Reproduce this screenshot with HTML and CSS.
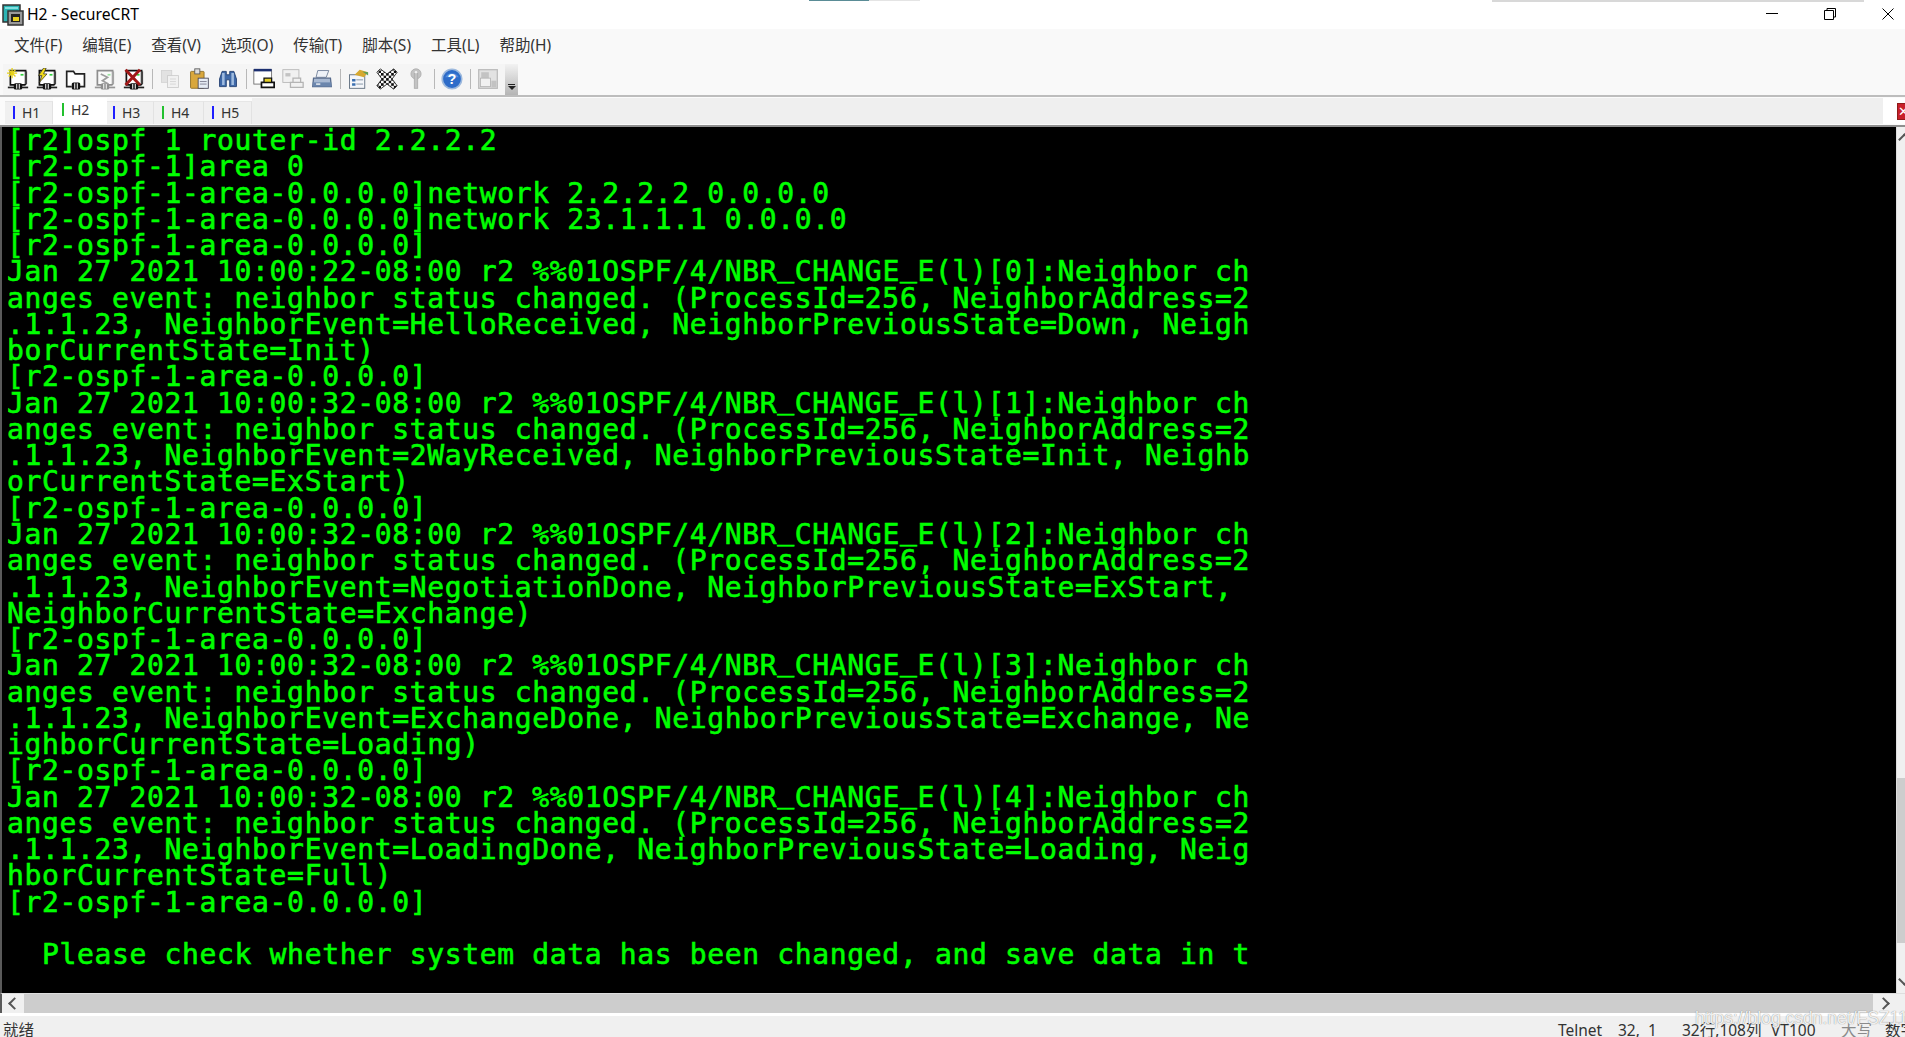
FILE: index.html
```html
<!DOCTYPE html>
<html lang="zh">
<head>
<meta charset="utf-8">
<title>H2 - SecureCRT</title>
<link rel="stylesheet" href="styles.css">
</head>
<body>
<svg class="defs" width="0" height="0" aria-hidden="true">
  <defs>
    <pattern id="chk" width="6" height="6" patternUnits="userSpaceOnUse">
      <rect width="6" height="6" fill="#fff"/>
      <rect width="3" height="3" fill="#111"/>
      <rect x="3" y="3" width="3" height="3" fill="#111"/>
    </pattern>
    <symbol id="term" viewBox="0 0 26 26">
      <path d="M4 3h18v16l-1 1H4z" fill="#fff" stroke="#111" stroke-width="2"/>
      <path d="M22.500 4v15" stroke="#444" stroke-width="2.500"/>
      <path d="M1 23h24" stroke="#222" stroke-width="2"/>
      <rect x="8" y="18" width="10" height="7.500" rx="2" fill="#111"/>
      <path d="M11.500 19v5.500M14.500 19v5.500" stroke="#fff" stroke-width="1.200"/>
      <rect x="16" y="7" width="3.500" height="2" fill="#2fd13a"/>
    </symbol>
  </defs>
</svg>
<div class="app">
  <header class="titlebar">
    <svg class="appicon" width="22" height="22" viewBox="0 0 22 22">
      <rect x="1" y="1" width="17" height="17" fill="#2bb3b3" stroke="#333" stroke-width="1.500"/>
      <path d="M3 3h13v2H3z" fill="#7fdede"/>
      <rect x="6" y="7" width="15" height="14" fill="#999" stroke="#333" stroke-width="1.500"/>
      <rect x="9" y="10" width="9" height="8" fill="#222"/>
      <rect x="11" y="13" width="6" height="4" fill="#e6cf1f"/>
    </svg>
    <span class="title">H2 - SecureCRT</span>
    <div class="taskhint"></div>
    <div class="shadowhint"></div>
    <div class="winctl">
      <svg width="12" height="12" viewBox="0 0 12 12"><path d="M0 5.500h12" stroke="#000"/></svg>
      <svg width="12" height="12" viewBox="0 0 12 12"><path d="M3 2.500V.500h8.500V9H9.500M.500 2.500h9v9h-9z" fill="none" stroke="#000"/></svg>
      <svg width="12" height="12" viewBox="0 0 12 12"><path d="M.500.500l11 11M11.500.500l-11 11" stroke="#000"/></svg>
    </div>
  </header>

  <nav class="menubar">
    <span class="menu">文件(F)</span><span class="menu">编辑(E)</span><span class="menu">查看(V)</span><span class="menu">选项(O)</span><span class="menu">传输(T)</span><span class="menu">脚本(S)</span><span class="menu">工具(L)</span><span class="menu">帮助(H)</span>
  </nav>

  <div class="toolbar">
    <div class="tools">
      <svg class="ico" viewBox="0 0 26 26"><use href="#term"/><path d="M6 0v12M0 6h12M2 2l8 8M10 2l-8 8" stroke="#e8d21a" stroke-width="1.600"/></svg>
      <svg class="ico" viewBox="0 0 26 26"><use href="#term"/><path d="M9 0L3 9h4l-3 8 9-10H9l3-7z" fill="#f2dc1c" stroke="#222" stroke-width=".8"/></svg>
      <svg class="ico" viewBox="0 0 26 26"><path d="M8 22H2V4h8l2 3h11v15h-6" fill="#fff" stroke="#222" stroke-width="2"/><rect x="8" y="17" width="10" height="8.500" rx="2" fill="#111"/><path d="M11.500 18v6.500M14.500 18v6.500" stroke="#fff" stroke-width="1.200"/></svg>
      <svg class="ico dim" viewBox="0 0 26 26"><use href="#term"/><path d="M8 7l8 4-6 4 7 4" fill="none" stroke="#333" stroke-width="2"/></svg>
      <svg class="ico" viewBox="0 0 26 26"><use href="#term"/><path d="M3 2l17 18M20 2L3 20" stroke="#a01818" stroke-width="3.500"/></svg>
      <i class="sep"></i>
      <svg class="ico dim" viewBox="0 0 26 26"><rect x="3" y="3" width="12" height="14" fill="#ccc" stroke="#aaa"/><rect x="10" y="9" width="13" height="14" fill="#eee" stroke="#999"/><path d="M13 13h7M13 16h7M13 19h7" stroke="#aaa"/></svg>
      <svg class="ico" viewBox="0 0 26 26"><rect x="3" y="4" width="16" height="20" rx="1" fill="#d9a73c" stroke="#8a6a20"/><rect x="8" y="1" width="6" height="6" fill="#ddd" stroke="#555"/><rect x="12" y="12" width="12" height="12" fill="#e7ecf4" stroke="#445"/><path d="M14 16h8M14 19h8" stroke="#778"/></svg>
      <svg class="ico" viewBox="0 0 26 26"><path d="M3 13l3-9h5v4h4V4h5l3 9v9h-8v-8h-4v8H3z" fill="#3f69a8" stroke="#1d3a6c"/><path d="M6 6h3v14H6zM17 6h3v14h-3z" fill="#9fbbdf"/></svg>
      <i class="sep"></i>
      <svg class="ico" viewBox="0 0 26 26"><rect x="1" y="2" width="21" height="17" fill="#fff" stroke="#666"/><rect x="1" y="1" width="21" height="3" fill="#1c2f70"/><path d="M10 17h15v6H10z" fill="#fff" stroke="#111" stroke-width="2"/><path d="M13 12h9v5h-9z" fill="#e3cf2a" stroke="#111" stroke-width="1.500"/></svg>
      <svg class="ico dim" viewBox="0 0 26 26"><rect x="1" y="2" width="19" height="15" fill="#eee" stroke="#666"/><path d="M4 6h6v4H4z" fill="#888"/><path d="M10 17h15v6H10zM13 12h9v5h-9z" fill="#eee" stroke="#666" stroke-width="1.500"/></svg>
      <svg class="ico" viewBox="0 0 26 26"><path d="M8 3h13l-3 8H6z" fill="#eef2f8" stroke="#6a7a94"/><path d="M3 12h20l1 10H2z" fill="#a8b9d2" stroke="#566a8c" stroke-width="1.500"/><path d="M2 17h22v5H2z" fill="#6b86ad"/><path d="M6 19h5" stroke="#fff" stroke-width="1.500"/></svg>
      <i class="sep"></i>
      <svg class="ico" viewBox="0 0 26 26"><rect x="3" y="8" width="18" height="16" fill="#f4f6fa" stroke="#567"/><path d="M6 13h4v3H6zM6 18h4v3H6z" fill="#3a6fb0"/><path d="M11 14h8M11 19h8" stroke="#789"/><path d="M9 8l6-6 10 3-5 6z" fill="#d6a830"/><path d="M18 4l7 1v4z" fill="#5e9e5a"/></svg>
      <svg class="ico" viewBox="0 0 26 26"><path d="M1 5l4-4 8 6 8-6 4 4-6 8 6 8-4 4-8-6-8 6-4-4 6-8z" fill="url(#chk)" stroke="#222"/></svg>
      <svg class="ico dim" viewBox="0 0 26 26"><circle cx="13" cy="7" r="6" fill="#888" stroke="#555"/><rect x="11" y="6" width="4" height="18" fill="#888" stroke="#555"/><circle cx="13" cy="5" r="1.500" fill="#eee"/></svg>
      <i class="sep"></i>
      <svg class="ico" viewBox="0 0 26 26"><circle cx="13" cy="13" r="11.500" fill="#2d6cc9" stroke="#9db9dd" stroke-width="2"/><path d="M5 11a9 9 0 0 1 16 0" fill="#6ea2ea" opacity=".6"/><text x="13" y="19" class="q">?</text></svg>
      <i class="sep"></i>
      <svg class="ico dim" viewBox="0 0 26 26"><rect x="2" y="2" width="22" height="22" fill="#ccc" stroke="#777" stroke-width="1.500"/><rect x="5" y="5" width="9" height="7" fill="#888"/><rect x="4" y="12" width="12" height="10" fill="#eee" stroke="#666"/><rect x="17" y="15" width="6" height="8" fill="#888"/></svg>
    </div>
    <div class="chev"><span class="chevline"></span><span class="chevtri"></span></div>
  </div>

  <div class="tabstrip">
    <div class="tabs">
      <span class="tab"><i class="dot blue"></i>H1</span>
      <span class="tab active"><i class="dot green"></i>H2</span>
      <span class="tab"><i class="dot blue"></i>H3</span>
      <span class="tab"><i class="dot green"></i>H4</span>
      <span class="tab"><i class="dot blue"></i>H5</span>
      <span class="tabfill"></span>
    </div>
    <div class="closezone"><span class="closetab">✕</span></div>
  </div>

  <main class="main">
    <pre class="terminal">[r2]ospf 1 router-id 2.2.2.2
[r2-ospf-1]area 0
[r2-ospf-1-area-0.0.0.0]network 2.2.2.2 0.0.0.0
[r2-ospf-1-area-0.0.0.0]network 23.1.1.1 0.0.0.0
[r2-ospf-1-area-0.0.0.0]
Jan 27 2021 10:00:22-08:00 r2 %%01OSPF/4/NBR<span class="us">_</span>CHANGE<span class="us">_</span>E(l)[0]:Neighbor ch
anges event: neighbor status changed. (ProcessId=256, NeighborAddress=2
.1.1.23, NeighborEvent=HelloReceived, NeighborPreviousState=Down, Neigh
borCurrentState=Init)
[r2-ospf-1-area-0.0.0.0]
Jan 27 2021 10:00:32-08:00 r2 %%01OSPF/4/NBR<span class="us">_</span>CHANGE<span class="us">_</span>E(l)[1]:Neighbor ch
anges event: neighbor status changed. (ProcessId=256, NeighborAddress=2
.1.1.23, NeighborEvent=2WayReceived, NeighborPreviousState=Init, Neighb
orCurrentState=ExStart)
[r2-ospf-1-area-0.0.0.0]
Jan 27 2021 10:00:32-08:00 r2 %%01OSPF/4/NBR<span class="us">_</span>CHANGE<span class="us">_</span>E(l)[2]:Neighbor ch
anges event: neighbor status changed. (ProcessId=256, NeighborAddress=2
.1.1.23, NeighborEvent=NegotiationDone, NeighborPreviousState=ExStart,
NeighborCurrentState=Exchange)
[r2-ospf-1-area-0.0.0.0]
Jan 27 2021 10:00:32-08:00 r2 %%01OSPF/4/NBR<span class="us">_</span>CHANGE<span class="us">_</span>E(l)[3]:Neighbor ch
anges event: neighbor status changed. (ProcessId=256, NeighborAddress=2
.1.1.23, NeighborEvent=ExchangeDone, NeighborPreviousState=Exchange, Ne
ighborCurrentState=Loading)
[r2-ospf-1-area-0.0.0.0]
Jan 27 2021 10:00:32-08:00 r2 %%01OSPF/4/NBR<span class="us">_</span>CHANGE<span class="us">_</span>E(l)[4]:Neighbor ch
anges event: neighbor status changed. (ProcessId=256, NeighborAddress=2
.1.1.23, NeighborEvent=LoadingDone, NeighborPreviousState=Loading, Neig
hborCurrentState=Full)
[r2-ospf-1-area-0.0.0.0]

  Please check whether system data has been changed, and save data in t</pre>
    <div class="vscroll">
      <span class="arrow up"></span>
      <div class="vtrack"><div class="vthumb"></div></div>
      <span class="arrow down"></span>
    </div>
  </main>

  <div class="hscroll">
    <span class="harrow left"></span>
    <div class="htrack"></div>
    <span class="harrow right"></span>
  </div>

  <footer class="status">
    <span class="ready">就绪</span>
    <span class="pane p1">Telnet</span>
    <span class="pane p2">32,&nbsp;&nbsp;1</span>
    <span class="pane p3">32行,108列</span>
    <span class="pane p4">VT100</span>
    <span class="pane p5 off">大写</span>
    <span class="pane p6">数字</span>
  </footer>
  <div class="watermark">https://blog.csdn.net/FSZ111</div>
</div>
</body>
</html>
```
FILE: styles.css
```css
* { box-sizing: border-box; }
html, body { margin: 0; padding: 0; height: 100%; overflow: hidden; background: #fff; }
.defs { position: absolute; }
.app {
  position: relative;
  display: flex;
  flex-direction: column;
  width: 1905px;
  height: 1037px;
  overflow: hidden;
  font-family: "Noto Sans", "Noto Sans CJK SC", sans-serif;
}

/* title bar */
.titlebar {
  position: relative;
  flex: 0 0 29px;
  display: flex;
  align-items: center;
  background: #fff;
  padding-left: 2px;
}
.appicon { flex: none; margin-right: 3px; }
.title { font-size: 15.700px; color: #000; padding-bottom: 2px; }
.taskhint {
  position: absolute; left: 809px; top: 0; width: 60px; height: 1px;
  background: #5a8c96;
}
.taskhint::after {
  content: ""; position: absolute; left: 60px; top: 0; width: 51px; height: 1px; background: #e4e4e4;
}
.shadowhint {
  position: absolute; left: 1492px; top: 0; width: 372px; height: 2px;
  background: #d8d8d8;
}
.winctl {
  position: absolute; right: 11px; top: 8px;
  display: flex; gap: 46px;
}
.winctl svg { display: block; }

/* menu */
.menubar {
  flex: 0 0 31px;
  display: flex;
  align-items: center;
  gap: 20px;
  padding-left: 14px;
  background: #f9f9f9;
}
.menu { font-size: 15.500px; color: #333; white-space: nowrap; }

/* toolbar */
.toolbar {
  flex: 0 0 37px;
  display: flex;
  align-items: flex-start;
  background: #f9f9f9;
  border-bottom: 2px solid #bdbdbd;
  padding: 4px 0 0 3px;
}
.tools {
  display: flex;
  align-items: center;
  gap: 7px;
  height: 31px;
  padding: 0 0 2px 4px;
  width: 502px;
  background: #f5f5f5;
}
.ico { width: 22px; height: 22px; flex: none; display: block; }
.ico.dim { opacity: .45; }
.q { font: bold 17px "Liberation Sans", sans-serif; fill: #fff; text-anchor: middle; }
.sep { flex: none; width: 1px; height: 20px; background: #b8b8b8; margin-right: -1px; }
.chev {
  width: 13px; height: 31px;
  background: linear-gradient(#f2f2f2, #b5b5b5);
  display: flex; flex-direction: column; align-items: center; justify-content: flex-end;
  padding-bottom: 5px; gap: 1px;
}
.chevline { width: 7px; height: 1px; background: #222; }
.chevtri { width: 0; height: 0; border: 4px solid transparent; border-top-color: #222; border-bottom: 0; }

/* tabs */
.tabstrip {
  flex: 0 0 30px;
  display: flex;
  background: #fbfbfb;
  border-bottom: 2px solid #8f8f8f;
  padding: 1px 0 1px 5px;
}
.tabs {
  flex: none;
  width: 1878px;
  display: flex;
  align-items: stretch;
}
.tabfill { flex: 1; background: #efefef; }
.tab {
  flex: none;
  width: 48px;
  margin-top: 3px;
  display: flex;
  align-items: center;
  gap: 7px;
  padding: 0 0 2px 8px;
  font-size: 14px;
  color: #333;
  border-right: 1px solid #e2e2e2;
  border-top: 1px solid #e6e6e6;
  background: #f0f0f0;
}
.tab.active {
  width: 54px;
  margin-top: 0;
  background: #fff;
  border: 0;
  padding-left: 9px;
  padding-bottom: 3px;
}
.tab:nth-child(3) { width: 47px; padding-left: 6px; }
.tab:nth-child(4) { width: 50px; padding-left: 8px; }
.dot { width: 2px; height: 13px; flex: none; }
.dot.blue { background: #1f1fff; }
.dot.green { background: #22c02e; }
.closezone { flex: 1; position: relative; background: #fff; }
.closetab {
  position: absolute; left: 14px; top: 5px;
  width: 16px; height: 17px;
  background: #c8202a;
  border: 1px solid #8f1a1a;
  color: #fff;
  font: bold 13px/15px "DejaVu Sans", sans-serif;
  overflow: hidden;
}

/* terminal */
.main { flex: 0 0 866px; display: flex; }
.terminal {
  flex: none;
  width: 1896px;
  margin: 0;
  padding: 1px 0 0 5px;
  background: #000;
  border-left: 2px solid #5a5a5a;
  color: #00ff00;
  font-family: "DejaVu Sans Mono", monospace;
  font-size: 28px;
  letter-spacing: 0.650px;
  line-height: 26.270px;
  -webkit-text-stroke: 0.6px #00ff00;
  overflow: hidden;
  white-space: pre;
}
.us { line-height: 0; vertical-align: 5px; }
.vscroll {
  flex: 1;
  display: flex;
  flex-direction: column;
  background: #f0f0f0;
  border-left: 1px solid #ddd;
}
.arrow { flex: 0 0 20px; position: relative; }
.arrow::after {
  content: ""; position: absolute; left: 3px; width: 7px; height: 7px;
  border-left: 2px solid #555; border-top: 2px solid #555;
}
.arrow.up::after { top: 8px; transform: rotate(45deg); }
.arrow.down::after { top: 2px; transform: rotate(225deg); }
.vtrack { flex: 1; position: relative; }
.vthumb { position: absolute; left: 0; right: 0; top: 631px; height: 165px; background: #cdcdcd; }

.hscroll {
  flex: 0 0 20px;
  display: flex;
  align-items: stretch;
  border-top: 1px solid #dedede;
  border-left: 2px solid #5a5a5a;
  background: #f0f0f0;
}
.harrow { flex: 0 0 22px; position: relative; }
.harrow::after {
  content: ""; position: absolute; top: 5px; width: 7px; height: 7px;
  border-left: 2px solid #555; border-top: 2px solid #555;
}
.harrow.left::after { left: 8px; transform: rotate(-45deg); }
.harrow.right::after { left: 6px; transform: rotate(135deg); }
.htrack { flex: 0 0 1849px; background: #cdcdcd; }

/* status */
.status {
  flex: 1;
  display: flex;
  margin-top: 3px;
  background: #f0f0f0;
  font-size: 15.500px;
  color: #333;
  line-height: 24px;
  padding-top: 2px;
  overflow: hidden;
  white-space: nowrap;
}
.ready { flex: 0 0 1554px; padding-left: 3px; }
.pane { flex: none; padding-left: 4px; }
.p1 { width: 60px; }
.p2 { width: 64px; }
.p3 { width: 89px; }
.p4 { width: 70px; }
.p5 { width: 44px; }
.p6 { width: 40px; }
.off { color: #8a8a8a; }

.watermark {
  position: absolute;
  left: 1695px;
  top: 1008px;
  font-family: "Liberation Sans", sans-serif;
  font-size: 17.500px;
  color: rgba(255,255,255,.9);
  text-shadow: 0 0 1px rgba(80,80,80,.8);
  white-space: nowrap;
}
```
